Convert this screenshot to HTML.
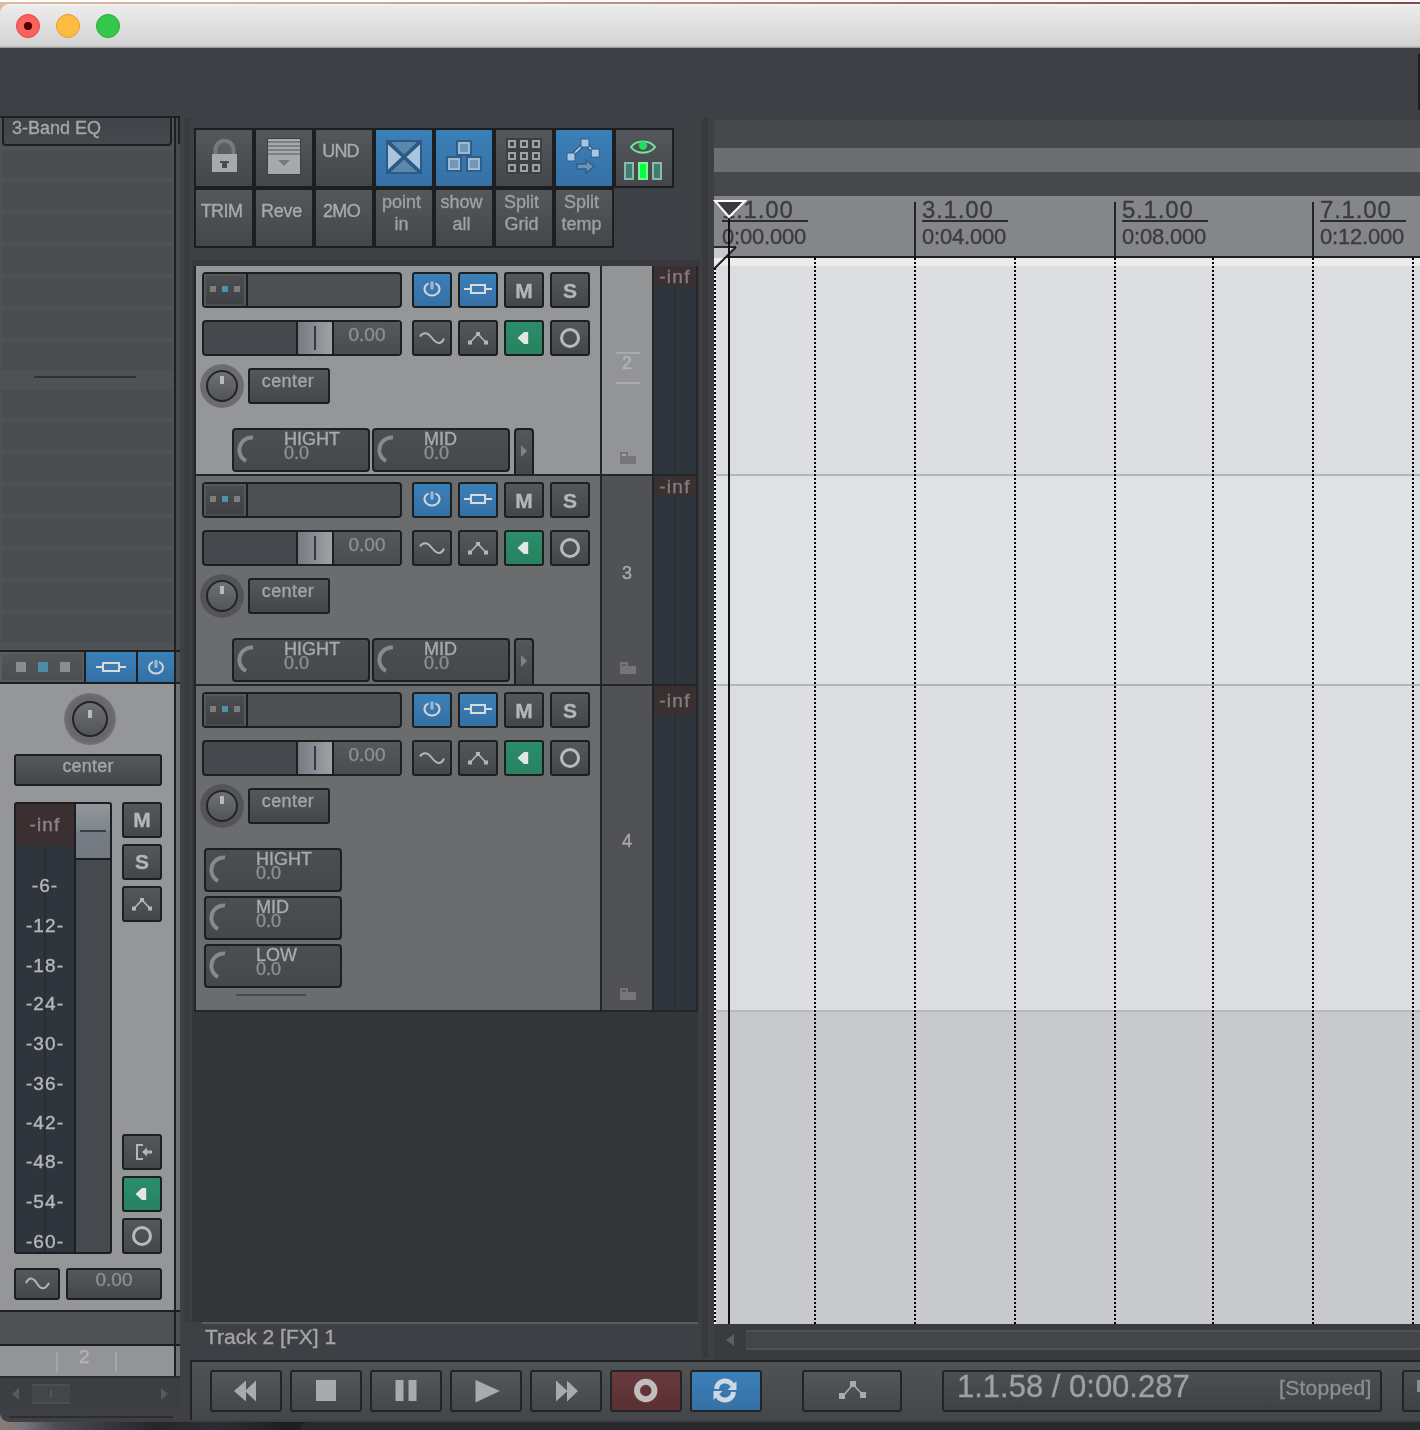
<!DOCTYPE html>
<html>
<head>
<meta charset="utf-8">
<title>REAPER</title>
<style>
html,body{margin:0;padding:0;}
body{width:1420px;height:1430px;overflow:hidden;position:relative;background:#3f4045;font-family:"Liberation Sans",sans-serif;color:#b4b5b7;}
.a{position:absolute;box-sizing:border-box;}
.btn{position:absolute;box-sizing:border-box;border:2px solid #1d1e20;border-radius:3px;background:linear-gradient(#54575b,#44464a);}
.blue{background:linear-gradient(#3b80b8,#3570a6);}
.green{background:linear-gradient(#2b8d6c,#27825f);}
.red{background:linear-gradient(#683a3d,#5b3033);}
.t{position:absolute;white-space:nowrap;line-height:1;will-change:transform;-webkit-text-stroke:.35px;}
svg{position:absolute;overflow:visible;}
</style>
</head>
<body>
<!--TITLEBAR-->
<div class="a" style="left:0;top:0;width:1420px;height:2px;background:#fff"></div>
<div class="a" style="left:0;top:2px;width:1420px;height:10px;background:linear-gradient(90deg,#e0ba9c,#c8a58c 30%,#a87068 65%,#86474d)"></div>
<div class="a" style="left:0;top:4px;width:1420px;height:44px;border-top-left-radius:9px;background:linear-gradient(#f4f4f4,#ebebeb 6%,#d4d4d4 93%,#c0c0c0 97%,#8a8a8c)"></div>
<div class="a" style="left:16px;top:14px;width:24px;height:24px;border-radius:50%;background:#fc625d;border:1px solid #e2463f"></div>
<div class="a" style="left:24px;top:22px;width:8px;height:8px;border-radius:50%;background:#4d0000"></div>
<div class="a" style="left:56px;top:14px;width:24px;height:24px;border-radius:50%;background:#fdbc40;border:1px solid #e0a028"></div>
<div class="a" style="left:96px;top:14px;width:24px;height:24px;border-radius:50%;background:#34c84a;border:1px solid #27aa35"></div>
<div class="a" style="left:1418px;top:54px;width:2px;height:56px;background:#1f1f1f"></div>
<!--LEFT-->
<div class="a" style="left:0;top:1414px;width:1420px;height:16px;background:linear-gradient(90deg,#8a7c73 0,#77777d 1.500%,#4c4c53 4%,#3a3a41 7%,#25252a 11%,#2d2d33 15%,#1f1f23 20%,#1c1c20 100%)"></div>
<div class="a" style="left:0;top:1378px;width:1420px;height:44px;background:#3f4045;border-bottom-left-radius:9px"></div>
<div class="a" style="left:0;top:116px;width:180px;height:2px;background:#1e1f21"></div>
<div class="a" style="left:0;top:118px;width:174px;height:532px;background:#4e5256"></div>
<div class="a" style="left:176px;top:118px;width:4px;height:532px;background:#484a4e"></div>
<div class="a" style="left:2px;top:150px;width:170px;height:28px;background:#4a4c50"></div>
<div class="a" style="left:2px;top:182px;width:170px;height:28px;background:#4a4c50"></div>
<div class="a" style="left:2px;top:214px;width:170px;height:28px;background:#4a4c50"></div>
<div class="a" style="left:2px;top:246px;width:170px;height:28px;background:#4a4c50"></div>
<div class="a" style="left:2px;top:278px;width:170px;height:28px;background:#4a4c50"></div>
<div class="a" style="left:2px;top:310px;width:170px;height:28px;background:#4a4c50"></div>
<div class="a" style="left:2px;top:342px;width:170px;height:28px;background:#4a4c50"></div>
<div class="a" style="left:2px;top:390px;width:170px;height:28px;background:#4a4c50"></div>
<div class="a" style="left:2px;top:422px;width:170px;height:28px;background:#4a4c50"></div>
<div class="a" style="left:2px;top:454px;width:170px;height:28px;background:#4a4c50"></div>
<div class="a" style="left:2px;top:486px;width:170px;height:28px;background:#4a4c50"></div>
<div class="a" style="left:2px;top:518px;width:170px;height:28px;background:#4a4c50"></div>
<div class="a" style="left:2px;top:550px;width:170px;height:28px;background:#4a4c50"></div>
<div class="a" style="left:2px;top:582px;width:170px;height:28px;background:#4a4c50"></div>
<div class="a" style="left:2px;top:614px;width:170px;height:28px;background:#4a4c50"></div>
<div class="a" style="left:34px;top:376px;width:102px;height:2px;background:#303134"></div>
<div class="a" style="left:2px;top:118px;width:170px;height:28px;background:linear-gradient(#40444a,#464a4e);border:2px solid #1e1f21;border-top:0;border-radius:0 0 4px 4px"></div>
<div class="t" style="left:12px;top:118px;font-size:18px;line-height:21px;color:#a6a7a9">3-Band EQ</div>
<div class="a" style="left:174px;top:116px;width:2px;height:1262px;background:#1e1f21"></div>
<div class="a" style="left:178px;top:116px;width:2px;height:28px;background:#1e1f21"></div>
<div class="a" style="left:184px;top:118px;width:6px;height:1204px;background:#3a3b3e"></div>
<div class="a" style="left:0;top:650px;width:180px;height:2px;background:#1e1f21"></div>
<div class="a" style="left:0;top:682px;width:180px;height:2px;background:#1e1f21"></div>
<div class="a" style="left:0;top:652px;width:84px;height:30px;background:linear-gradient(#545659,#4b4d50);border:2px solid #5a5c5f;border-bottom-color:#56585b"></div>
<div class="a" style="left:176px;top:652px;width:4px;height:30px;background:#4d4f52"></div>
<div class="a" style="left:16px;top:662px;width:10px;height:10px;background:#8b8c8e"></div>
<div class="a" style="left:38px;top:662px;width:10px;height:10px;background:#4a8ea6"></div>
<div class="a" style="left:60px;top:662px;width:10px;height:10px;background:#8b8c8e"></div>
<div class="a" style="left:84px;top:652px;width:2px;height:30px;background:#1e1f21"></div>
<div class="a blue" style="left:86px;top:652px;width:50px;height:30px"></div>
<div class="a" style="left:136px;top:652px;width:2px;height:30px;background:#1e1f21"></div>
<div class="a blue" style="left:138px;top:652px;width:36px;height:30px"></div>
<svg style="left:86px;top:652px" width="50" height="30"><path d="M10 15H40" stroke="#d9dadb" stroke-width="2" fill="none"/><rect x="17" y="11" width="16" height="8" fill="#3a7bb1" stroke="#d9dadb" stroke-width="2"/></svg>
<svg style="left:138px;top:652px" width="36" height="30"><path d="M15 9.800A7 6.200 0 1 0 21 9.800" stroke="#d0d4d8" stroke-width="2" fill="none"/><rect x="16.500" y="8" width="3" height="8" fill="#9db9d2"/></svg>
<div class="a" style="left:0;top:684px;width:174px;height:626px;background:#959698"></div>
<div class="a" style="left:176px;top:684px;width:4px;height:626px;background:#707174"></div>
<div class="a" style="left:0;top:1310px;width:180px;height:2px;background:#1e1f21"></div>
<div class="a" style="left:0;top:1312px;width:174px;height:32px;background:#4e5255"></div>
<div class="a" style="left:176px;top:1312px;width:4px;height:32px;background:#4d4f52"></div>
<div class="a" style="left:0;top:1344px;width:180px;height:2px;background:#1e1f21"></div>
<div class="a" style="left:0;top:1346px;width:174px;height:30px;background:#939496"></div>
<div class="a" style="left:176px;top:1346px;width:4px;height:30px;background:#707174"></div>
<div class="a" style="left:0;top:1376px;width:180px;height:2px;background:#2a2b2d"></div>
<div class="a" style="left:56px;top:1352px;width:2px;height:20px;background:#a5a6a8"></div>
<div class="a" style="left:115px;top:1352px;width:2px;height:20px;background:#a5a6a8"></div>
<div class="t" style="left:79px;top:1347px;font-size:19px;line-height:20px;color:#b3b4b6">2</div>
<div class="a" style="left:0;top:1378px;width:180px;height:32px;background:#3d3e41"></div>
<div class="a" style="left:32px;top:1384px;width:38px;height:20px;background:#444548;border-top:2px solid #4c4d50;border-bottom:2px solid #4c4d50"></div>
<div class="a" style="left:50px;top:1390px;width:2px;height:8px;background:#55565a"></div>
<svg style="left:0;top:1378px" width="180" height="32"><path d="M12 16L19 10V22Z" fill="#58595c"/><path d="M168 16L161 10V22Z" fill="#58595c"/></svg>
<div class="a" style="left:9px;top:1416px;width:164px;height:2px;background:#2c2d2f"></div>
<div class="a" style="left:64px;top:693px;width:52px;height:52px;border-radius:50%;background:radial-gradient(circle,rgba(0,0,0,.34) 0,rgba(0,0,0,.3) 62%,rgba(0,0,0,.16) 80%,rgba(0,0,0,.05) 92%,rgba(0,0,0,0) 100%)"></div>
<div class="a" style="left:72px;top:701px;width:36px;height:36px;border-radius:50%;border:2px solid #232426;background:linear-gradient(#6f7073,#535458)"></div>
<div class="a" style="left:88px;top:710px;width:4px;height:8px;background:#b9babc"></div>
<div class="btn" style="left:14px;top:754px;width:148px;height:32px"></div>
<div class="t" style="left:14px;top:754px;width:148px;text-align:center;font-size:18px;line-height:24px;color:#a4a5a7;letter-spacing:.2px">center</div>
<div class="a" style="left:14px;top:802px;width:98px;height:452px;border:2px solid #1d1e20;border-radius:3px;background:#474b4f;overflow:hidden"><div class="a" style="left:0;top:0;width:58px;height:448px;background:#2f353c"></div><div class="a" style="left:28px;top:42px;width:2px;height:406px;background:#292d32"></div><div class="a" style="left:0;top:0;width:58px;height:42px;background:#3a2f31"></div><div class="a" style="left:58px;top:0;width:2px;height:448px;background:#1d1e20"></div><div class="a" style="left:60px;top:0;width:34px;height:54px;background:linear-gradient(#90969c,#7f868c 49%,#767d84 51%,#71787f)"></div><div class="a" style="left:64px;top:26px;width:26px;height:2px;background:#3c4045"></div><div class="a" style="left:60px;top:54px;width:34px;height:2px;background:#1d1e20"></div></div>
<div class="t" style="left:16px;top:814px;width:58px;text-align:center;font-size:19px;line-height:22px;color:#8f8587;letter-spacing:1.2px">-inf</div>
<div class="t" style="left:16px;top:875px;width:58px;text-align:center;font-size:19px;line-height:22px;color:#b7b8ba;letter-spacing:1.1px">-6-</div>
<div class="t" style="left:16px;top:915px;width:58px;text-align:center;font-size:19px;line-height:22px;color:#b7b8ba;letter-spacing:1.1px">-12-</div>
<div class="t" style="left:16px;top:955px;width:58px;text-align:center;font-size:19px;line-height:22px;color:#b7b8ba;letter-spacing:1.1px">-18-</div>
<div class="t" style="left:16px;top:993px;width:58px;text-align:center;font-size:19px;line-height:22px;color:#b7b8ba;letter-spacing:1.1px">-24-</div>
<div class="t" style="left:16px;top:1033px;width:58px;text-align:center;font-size:19px;line-height:22px;color:#b7b8ba;letter-spacing:1.1px">-30-</div>
<div class="t" style="left:16px;top:1073px;width:58px;text-align:center;font-size:19px;line-height:22px;color:#b7b8ba;letter-spacing:1.1px">-36-</div>
<div class="t" style="left:16px;top:1112px;width:58px;text-align:center;font-size:19px;line-height:22px;color:#b7b8ba;letter-spacing:1.1px">-42-</div>
<div class="t" style="left:16px;top:1151px;width:58px;text-align:center;font-size:19px;line-height:22px;color:#b7b8ba;letter-spacing:1.1px">-48-</div>
<div class="t" style="left:16px;top:1191px;width:58px;text-align:center;font-size:19px;line-height:22px;color:#b7b8ba;letter-spacing:1.1px">-54-</div>
<div class="t" style="left:16px;top:1231px;width:58px;text-align:center;font-size:19px;line-height:22px;color:#b7b8ba;letter-spacing:1.1px">-60-</div>
<div class="btn" style="left:122px;top:802px;width:40px;height:36px"></div>
<div class="t" style="left:122px;top:809px;width:40px;text-align:center;font-size:21px;font-weight:bold;color:#b4b5b7">M</div>
<div class="btn" style="left:122px;top:844px;width:40px;height:36px"></div>
<div class="t" style="left:122px;top:851px;width:40px;text-align:center;font-size:21px;font-weight:bold;color:#b4b5b7">S</div>
<div class="btn" style="left:122px;top:886px;width:40px;height:36px"></div>
<svg style="left:122px;top:886px" width="40" height="36"><path d="M12 22.500L20 14L28 22.500" stroke="#b4b5b7" stroke-width="1.600" fill="none"/><rect x="18" y="12" width="4" height="4" fill="#b4b5b7"/><rect x="10" y="20.500" width="4" height="4" fill="#b4b5b7"/><rect x="26" y="20.500" width="4" height="4" fill="#b4b5b7"/></svg>
<div class="btn" style="left:122px;top:1134px;width:40px;height:36px"></div>
<svg style="left:122px;top:1134px" width="40" height="36"><path d="M21 11H15V25H21" stroke="#b4b5b7" stroke-width="2" fill="none"/><path d="M20 18L25 13.5V16.5H30V19.5H25V22.5Z" fill="#b4b5b7"/></svg>
<div class="btn green" style="left:122px;top:1176px;width:40px;height:36px"></div>
<svg style="left:122px;top:1176px" width="40" height="36"><path d="M13.500 18L20 12H24.200V24H20Z" fill="#e4e6e6"/></svg>
<div class="btn" style="left:122px;top:1218px;width:40px;height:36px"></div>
<svg style="left:122px;top:1218px" width="40" height="36"><circle cx="20" cy="18" r="8.5" stroke="#b9babc" stroke-width="3" fill="none"/></svg>
<div class="btn" style="left:14px;top:1268px;width:46px;height:32px"></div>
<svg style="left:14px;top:1268px" width="46" height="32"><path d="M12 15C15 9 19 9 23 15.5S31 22 35 15" stroke="#b4b5b7" stroke-width="2" fill="none"/></svg>
<div class="btn" style="left:66px;top:1268px;width:96px;height:32px"></div>
<div class="t" style="left:66px;top:1269px;width:96px;text-align:center;font-size:19px;line-height:22px;color:#8d8f92">0.00</div>
<!--TOOLBAR-->
<div class="a" style="left:194px;top:128px;width:480px;height:60px;background:#232426"></div>
<div class="a" style="left:194px;top:186px;width:420px;height:62px;background:#232426"></div>
<div class="btn " style="left:194px;top:128px;width:60px;height:60px"></div>
<div class="btn " style="left:254px;top:128px;width:60px;height:60px"></div>
<div class="btn " style="left:314px;top:128px;width:60px;height:60px"></div>
<div class="btn blue" style="left:374px;top:128px;width:60px;height:60px"></div>
<div class="btn blue" style="left:434px;top:128px;width:60px;height:60px"></div>
<div class="btn " style="left:494px;top:128px;width:60px;height:60px"></div>
<div class="btn blue" style="left:554px;top:128px;width:60px;height:60px"></div>
<div class="btn " style="left:614px;top:128px;width:60px;height:60px"></div>
<div class="btn " style="left:194px;top:188px;width:60px;height:60px"></div>
<div class="btn " style="left:254px;top:188px;width:60px;height:60px"></div>
<div class="btn " style="left:314px;top:188px;width:60px;height:60px"></div>
<div class="btn " style="left:374px;top:188px;width:60px;height:60px"></div>
<div class="btn " style="left:434px;top:188px;width:60px;height:60px"></div>
<div class="btn " style="left:494px;top:188px;width:60px;height:60px"></div>
<div class="btn " style="left:554px;top:188px;width:60px;height:60px"></div>
<svg style="left:194px;top:128px" width="59" height="59"><path d="M21.5 27V21.700A9 9 0 0 1 39.500 21.700V27" stroke="#777a7d" stroke-width="4" fill="#5b5e61"/><rect x="18" y="26" width="25" height="18" fill="#a8a9ab"/><path d="M26 33H35V35H33V40H28V35H26Z" fill="#4a4c50"/></svg>
<svg style="left:254px;top:128px" width="59" height="59"><rect x="13" y="10" width="34" height="37" fill="#3e4043"/><rect x="14" y="11" width="32" height="35" fill="#a8a9ab"/><rect x="14" y="13" width="32" height="2" fill="#7d7f82"/><rect x="14" y="17" width="32" height="2" fill="#7d7f82"/><rect x="14" y="21" width="32" height="2" fill="#7d7f82"/><rect x="14" y="25" width="32" height="2" fill="#7d7f82"/><path d="M24 32H36L30 38Z" fill="#77797c"/></svg>
<svg style="left:374px;top:128px" width="59" height="59"><rect x="12" y="12" width="36" height="34" fill="#2d5a85"/><path d="M14 16.500L27.500 29L14 41.500Z" fill="#a9c6de"/><path d="M46 16.500L32.500 29L46 41.500Z" fill="#a9c6de"/><path d="M17 14H43L30 26.500Z" fill="#5c87ad"/><path d="M17 44H43L30 31.500Z" fill="#5c87ad"/></svg>
<svg style="left:434px;top:128px" width="59" height="59"><rect x="22" y="12" width="16" height="16" fill="#2d5f8a"/><rect x="24" y="14" width="12" height="12" fill="#9dbad2"/><rect x="26" y="16" width="8" height="8" fill="#6f98ba"/><rect x="12" y="28" width="16" height="16" fill="#2d5f8a"/><rect x="14" y="30" width="12" height="12" fill="#9dbad2"/><rect x="16" y="32" width="8" height="8" fill="#6f98ba"/><rect x="32" y="28" width="16" height="16" fill="#2d5f8a"/><rect x="34" y="30" width="12" height="12" fill="#9dbad2"/><rect x="36" y="32" width="8" height="8" fill="#6f98ba"/></svg>
<svg style="left:494px;top:128px" width="59" height="59"><rect x="12" y="10" width="36" height="36" fill="#3d3f42"/><rect x="15" y="13" width="6" height="6" fill="none" stroke="#a0a1a3" stroke-width="2"/><rect x="27" y="13" width="6" height="6" fill="none" stroke="#a0a1a3" stroke-width="2"/><rect x="39" y="13" width="6" height="6" fill="none" stroke="#a0a1a3" stroke-width="2"/><rect x="15" y="25" width="6" height="6" fill="none" stroke="#a0a1a3" stroke-width="2"/><rect x="27" y="25" width="6" height="6" fill="none" stroke="#a0a1a3" stroke-width="2"/><rect x="39" y="25" width="6" height="6" fill="none" stroke="#a0a1a3" stroke-width="2"/><rect x="15" y="37" width="6" height="6" fill="none" stroke="#a0a1a3" stroke-width="2"/><rect x="27" y="37" width="6" height="6" fill="none" stroke="#a0a1a3" stroke-width="2"/><rect x="39" y="37" width="6" height="6" fill="none" stroke="#a0a1a3" stroke-width="2"/></svg>
<svg style="left:554px;top:128px" width="59" height="59"><path d="M17 28.500L31 15L41 25" stroke="#2d5f8a" stroke-width="4" fill="none"/><path d="M17 28.500L31 15L41 25" stroke="#c9dbe9" stroke-width="1.600" fill="none"/><rect x="26.5" y="10.5" width="9" height="9" fill="#2d5f8a"/><rect x="27.5" y="11.5" width="7" height="7" fill="#a9c6de"/><rect x="12.5" y="24.5" width="9" height="9" fill="#2d5f8a"/><rect x="13.5" y="25.5" width="7" height="7" fill="#a9c6de"/><rect x="36.8" y="20.6" width="9" height="9" fill="#2d5f8a"/><rect x="37.8" y="21.6" width="7" height="7" fill="#a9c6de"/><path d="M23 36H32V32L40 38.500L32 45V41H23Z" fill="#6f93b3" stroke="#2d5f8a" stroke-width="1.500"/></svg>
<svg style="left:614px;top:128px" width="59" height="59"><path d="M17 19C22 11.500 36 11.500 41 19C36 26.500 22 26.500 17 19Z" fill="none" stroke="#6ee79a" stroke-width="2"/><circle cx="29" cy="17.500" r="4.200" fill="#1fe05a"/><rect x="11" y="35" width="8" height="16" fill="#3d7d72" stroke="#8fb8ad" stroke-width="2"/><rect x="25" y="35" width="8" height="16" fill="#00ff40" stroke="#7df09a" stroke-width="2"/><rect x="39" y="35" width="8" height="16" fill="#3d7d72" stroke="#8fb8ad" stroke-width="2"/></svg>
<div class="t" style="left:311px;top:142px;width:59px;text-align:center;font-size:18px;letter-spacing:-.8px;color:#a9aaac">UND</div>
<div class="t" style="left:192px;top:202px;width:59px;text-align:center;font-size:18px;letter-spacing:-0.6px;color:#a9aaac">TRIM</div>
<div class="t" style="left:252px;top:202px;width:59px;text-align:center;font-size:18px;letter-spacing:-0.2px;color:#a9aaac">Reve</div>
<div class="t" style="left:312px;top:202px;width:59px;text-align:center;font-size:18px;letter-spacing:-0.6px;color:#a9aaac">2MO</div>
<div class="t" style="left:372px;top:191px;width:59px;text-align:center;font-size:18px;line-height:22px;color:#a0a1a3;white-space:normal">point<br>in</div>
<div class="t" style="left:432px;top:191px;width:59px;text-align:center;font-size:18px;line-height:22px;color:#a0a1a3;white-space:normal">show<br>all</div>
<div class="t" style="left:492px;top:191px;width:59px;text-align:center;font-size:18px;line-height:22px;color:#a0a1a3;white-space:normal">Split<br>Grid</div>
<div class="t" style="left:552px;top:191px;width:59px;text-align:center;font-size:18px;line-height:22px;color:#a0a1a3;white-space:normal">Split<br>temp</div>
<!--TRACKS-->
<div class="a" style="left:192px;top:260px;width:508px;height:6px;background:#38393c"></div>
<div class="a" style="left:192px;top:266px;width:2px;height:1056px;background:#363739"></div>
<div class="a" style="left:194px;top:266px;width:504px;height:746px;background:#242527"></div>
<div class="a" style="left:702px;top:118px;width:6px;height:1240px;background:#38393c"></div>
<div class="a" style="left:196px;top:266px;width:404px;height:208px;background:#959698"></div>
<div class="a" style="left:602px;top:266px;width:50px;height:208px;background:#939496"></div>
<div class="a" style="left:654px;top:266px;width:42px;height:208px;background:#2f353c"></div>
<div class="a" style="left:674px;top:286px;width:2px;height:188px;background:#2a2d31"></div>
<div class="a" style="left:654px;top:266px;width:42px;height:20px;background:#3a2f31"></div>
<div class="t" style="left:654px;top:267px;width:42px;text-align:center;font-size:19px;line-height:20px;color:#857d7e;letter-spacing:1.3px">-inf</div>
<div class="btn" style="left:202px;top:272px;width:200px;height:36px;background:#4d5154;border-radius:4px"></div>
<div class="a" style="left:204px;top:274px;width:42px;height:32px;background:linear-gradient(#4b4d50,#3f4144);border:2px solid #55575a;border-bottom-color:#4a4c4f"></div>
<div class="a" style="left:246px;top:274px;width:2px;height:32px;background:#1d1e20"></div>
<div class="a" style="left:210px;top:286px;width:6px;height:6px;background:#7c7d7f"></div>
<div class="a" style="left:222px;top:286px;width:6px;height:6px;background:#4a93ad"></div>
<div class="a" style="left:234px;top:286px;width:6px;height:6px;background:#7c7d7f"></div>
<div class="btn blue" style="left:412px;top:272px;width:40px;height:36px"></div>
<svg style="left:412px;top:272px" width="40" height="36"><path d="M16.500 11.300A7.500 6.500 0 1 0 23.500 11.300" stroke="#d0d4d8" stroke-width="2" fill="none"/><rect x="18.500" y="9.500" width="3" height="8" fill="#9db9d2"/></svg>
<div class="btn blue" style="left:458px;top:272px;width:40px;height:36px"></div>
<svg style="left:458px;top:272px" width="40" height="36"><path d="M6 17H34" stroke="#d9dadb" stroke-width="2" fill="none"/><rect x="13" y="13" width="14" height="8" fill="#3a7bb1" stroke="#d9dadb" stroke-width="2"/></svg>
<div class="btn" style="left:504px;top:272px;width:40px;height:36px"></div>
<div class="t" style="left:504px;top:280px;width:40px;text-align:center;font-size:21px;font-weight:bold;color:#b4b5b7">M</div>
<div class="btn" style="left:550px;top:272px;width:40px;height:36px"></div>
<div class="t" style="left:550px;top:280px;width:40px;text-align:center;font-size:21px;font-weight:bold;color:#b4b5b7">S</div>
<div class="btn" style="left:202px;top:320px;width:200px;height:36px;background:#45484c;border-radius:4px"></div>
<div class="a" style="left:296px;top:322px;width:38px;height:32px;background:linear-gradient(90deg,#747a80,#9da2a7);border-left:2px solid #1d1e20;border-right:2px solid #1d1e20"></div>
<div class="a" style="left:314px;top:326px;width:2px;height:24px;background:#35383c"></div>
<div class="a" style="left:334px;top:322px;width:66px;height:32px;background:linear-gradient(#56595c,#4a4d50)"></div>
<div class="t" style="left:334px;top:325px;width:66px;text-align:center;font-size:19px;color:#8d8f91">0.00</div>
<div class="btn" style="left:412px;top:320px;width:40px;height:36px"></div>
<svg style="left:412px;top:320px" width="40" height="36"><path d="M8 16.500C10.500 12.500 15 11.500 20 18S29.500 24.500 32 18.500" stroke="#b4b5b7" stroke-width="2" fill="none"/></svg>
<div class="btn" style="left:458px;top:320px;width:40px;height:36px"></div>
<svg style="left:458px;top:320px" width="40" height="36"><path d="M12 22.500L20 14L28 22.500" stroke="#b4b5b7" stroke-width="1.600" fill="none"/><rect x="18" y="12" width="4" height="4" fill="#b4b5b7"/><rect x="10" y="20.500" width="4" height="4" fill="#b4b5b7"/><rect x="26" y="20.500" width="4" height="4" fill="#b4b5b7"/></svg>
<div class="btn green" style="left:504px;top:320px;width:40px;height:36px"></div>
<svg style="left:504px;top:320px" width="40" height="36"><path d="M13.500 18L20 12H24.200V24H20Z" fill="#e4e6e6"/></svg>
<div class="btn" style="left:550px;top:320px;width:40px;height:36px"></div>
<svg style="left:550px;top:320px" width="40" height="36"><circle cx="20" cy="18" r="8.5" stroke="#b9babc" stroke-width="3" fill="none"/></svg>
<div class="a" style="left:200px;top:364px;width:44px;height:44px;border-radius:50%;background:radial-gradient(circle,rgba(0,0,0,.3) 0,rgba(0,0,0,.28) 66%,rgba(0,0,0,.15) 82%,rgba(0,0,0,.05) 93%,rgba(0,0,0,0) 100%)"></div>
<div class="a" style="left:206px;top:370px;width:32px;height:32px;border-radius:50%;border:2px solid #232426;background:linear-gradient(#6f7073,#535458)"></div>
<div class="a" style="left:220px;top:376px;width:4px;height:8px;background:#b9babc"></div>
<div class="btn" style="left:248px;top:368px;width:82px;height:36px"></div>
<div class="t" style="left:248px;top:372px;width:80px;text-align:center;font-size:18px;letter-spacing:.4px;color:#a4a5a7">center</div>
<div class="btn" style="left:232px;top:428px;width:138px;height:44px;border-radius:4px;background:linear-gradient(#4b4e52,#45484b)"></div>
<svg style="left:232px;top:428px" width="40" height="44"><path d="M21 9.5A12.5 12.5 0 0 0 14 33" stroke="#88898b" stroke-width="4" fill="none"/></svg>
<div class="t" style="left:284px;top:430px;font-size:18px;color:#a9aaac">HIGHT</div>
<div class="t" style="left:284px;top:444px;font-size:18px;color:#8d8f91">0.0</div>
<div class="btn" style="left:372px;top:428px;width:138px;height:44px;border-radius:4px;background:linear-gradient(#4b4e52,#45484b)"></div>
<svg style="left:372px;top:428px" width="40" height="44"><path d="M21 9.5A12.5 12.5 0 0 0 14 33" stroke="#88898b" stroke-width="4" fill="none"/></svg>
<div class="t" style="left:424px;top:430px;font-size:18px;color:#a9aaac">MID</div>
<div class="t" style="left:424px;top:444px;font-size:18px;color:#8d8f91">0.0</div>
<div class="btn" style="left:514px;top:428px;width:20px;height:46px;border-bottom:0;border-radius:4px 4px 0 0"></div>
<svg style="left:514px;top:428px" width="20" height="44"><path d="M7 17L13 23L7 29Z" fill="#808184"/></svg>
<div class="t" style="left:602px;top:353px;width:50px;text-align:center;font-size:18px;line-height:20px;color:#b3b4b6">2</div>
<div class="a" style="left:616px;top:352px;width:24px;height:2px;background:#a9aaac"></div>
<div class="a" style="left:616px;top:382px;width:24px;height:2px;background:#a9aaac"></div>
<svg style="left:620px;top:452px" width="16" height="12"><path d="M0 0H8V4H16V12H0Z" fill="#777577"/><rect x="2" y="2" width="4" height="2" fill="#a2a2a4"/></svg>
<div class="a" style="left:196px;top:476px;width:404px;height:208px;background:#6b6c6e"></div>
<div class="a" style="left:602px;top:476px;width:50px;height:208px;background:#515256"></div>
<div class="a" style="left:654px;top:476px;width:42px;height:208px;background:#2f353c"></div>
<div class="a" style="left:674px;top:496px;width:2px;height:188px;background:#2a2d31"></div>
<div class="a" style="left:654px;top:476px;width:42px;height:20px;background:#3a2f31"></div>
<div class="t" style="left:654px;top:477px;width:42px;text-align:center;font-size:19px;line-height:20px;color:#857d7e;letter-spacing:1.3px">-inf</div>
<div class="btn" style="left:202px;top:482px;width:200px;height:36px;background:#4d5154;border-radius:4px"></div>
<div class="a" style="left:204px;top:484px;width:42px;height:32px;background:linear-gradient(#4b4d50,#3f4144);border:2px solid #55575a;border-bottom-color:#4a4c4f"></div>
<div class="a" style="left:246px;top:484px;width:2px;height:32px;background:#1d1e20"></div>
<div class="a" style="left:210px;top:496px;width:6px;height:6px;background:#7c7d7f"></div>
<div class="a" style="left:222px;top:496px;width:6px;height:6px;background:#4a93ad"></div>
<div class="a" style="left:234px;top:496px;width:6px;height:6px;background:#7c7d7f"></div>
<div class="btn blue" style="left:412px;top:482px;width:40px;height:36px"></div>
<svg style="left:412px;top:482px" width="40" height="36"><path d="M16.500 11.300A7.500 6.500 0 1 0 23.500 11.300" stroke="#d0d4d8" stroke-width="2" fill="none"/><rect x="18.500" y="9.500" width="3" height="8" fill="#9db9d2"/></svg>
<div class="btn blue" style="left:458px;top:482px;width:40px;height:36px"></div>
<svg style="left:458px;top:482px" width="40" height="36"><path d="M6 17H34" stroke="#d9dadb" stroke-width="2" fill="none"/><rect x="13" y="13" width="14" height="8" fill="#3a7bb1" stroke="#d9dadb" stroke-width="2"/></svg>
<div class="btn" style="left:504px;top:482px;width:40px;height:36px"></div>
<div class="t" style="left:504px;top:490px;width:40px;text-align:center;font-size:21px;font-weight:bold;color:#b4b5b7">M</div>
<div class="btn" style="left:550px;top:482px;width:40px;height:36px"></div>
<div class="t" style="left:550px;top:490px;width:40px;text-align:center;font-size:21px;font-weight:bold;color:#b4b5b7">S</div>
<div class="btn" style="left:202px;top:530px;width:200px;height:36px;background:#45484c;border-radius:4px"></div>
<div class="a" style="left:296px;top:532px;width:38px;height:32px;background:linear-gradient(90deg,#747a80,#9da2a7);border-left:2px solid #1d1e20;border-right:2px solid #1d1e20"></div>
<div class="a" style="left:314px;top:536px;width:2px;height:24px;background:#35383c"></div>
<div class="a" style="left:334px;top:532px;width:66px;height:32px;background:linear-gradient(#56595c,#4a4d50)"></div>
<div class="t" style="left:334px;top:535px;width:66px;text-align:center;font-size:19px;color:#8d8f91">0.00</div>
<div class="btn" style="left:412px;top:530px;width:40px;height:36px"></div>
<svg style="left:412px;top:530px" width="40" height="36"><path d="M8 16.500C10.500 12.500 15 11.500 20 18S29.500 24.500 32 18.500" stroke="#b4b5b7" stroke-width="2" fill="none"/></svg>
<div class="btn" style="left:458px;top:530px;width:40px;height:36px"></div>
<svg style="left:458px;top:530px" width="40" height="36"><path d="M12 22.500L20 14L28 22.500" stroke="#b4b5b7" stroke-width="1.600" fill="none"/><rect x="18" y="12" width="4" height="4" fill="#b4b5b7"/><rect x="10" y="20.500" width="4" height="4" fill="#b4b5b7"/><rect x="26" y="20.500" width="4" height="4" fill="#b4b5b7"/></svg>
<div class="btn green" style="left:504px;top:530px;width:40px;height:36px"></div>
<svg style="left:504px;top:530px" width="40" height="36"><path d="M13.500 18L20 12H24.200V24H20Z" fill="#e4e6e6"/></svg>
<div class="btn" style="left:550px;top:530px;width:40px;height:36px"></div>
<svg style="left:550px;top:530px" width="40" height="36"><circle cx="20" cy="18" r="8.5" stroke="#b9babc" stroke-width="3" fill="none"/></svg>
<div class="a" style="left:200px;top:574px;width:44px;height:44px;border-radius:50%;background:radial-gradient(circle,rgba(0,0,0,.24) 0,rgba(0,0,0,.22) 66%,rgba(0,0,0,.12) 82%,rgba(0,0,0,.04) 93%,rgba(0,0,0,0) 100%)"></div>
<div class="a" style="left:206px;top:580px;width:32px;height:32px;border-radius:50%;border:2px solid #232426;background:linear-gradient(#6f7073,#535458)"></div>
<div class="a" style="left:220px;top:586px;width:4px;height:8px;background:#b9babc"></div>
<div class="btn" style="left:248px;top:578px;width:82px;height:36px"></div>
<div class="t" style="left:248px;top:582px;width:80px;text-align:center;font-size:18px;letter-spacing:.4px;color:#a4a5a7">center</div>
<div class="btn" style="left:232px;top:638px;width:138px;height:44px;border-radius:4px;background:linear-gradient(#4b4e52,#45484b)"></div>
<svg style="left:232px;top:638px" width="40" height="44"><path d="M21 9.5A12.5 12.5 0 0 0 14 33" stroke="#88898b" stroke-width="4" fill="none"/></svg>
<div class="t" style="left:284px;top:640px;font-size:18px;color:#a9aaac">HIGHT</div>
<div class="t" style="left:284px;top:654px;font-size:18px;color:#8d8f91">0.0</div>
<div class="btn" style="left:372px;top:638px;width:138px;height:44px;border-radius:4px;background:linear-gradient(#4b4e52,#45484b)"></div>
<svg style="left:372px;top:638px" width="40" height="44"><path d="M21 9.5A12.5 12.5 0 0 0 14 33" stroke="#88898b" stroke-width="4" fill="none"/></svg>
<div class="t" style="left:424px;top:640px;font-size:18px;color:#a9aaac">MID</div>
<div class="t" style="left:424px;top:654px;font-size:18px;color:#8d8f91">0.0</div>
<div class="btn" style="left:514px;top:638px;width:20px;height:46px;border-bottom:0;border-radius:4px 4px 0 0"></div>
<svg style="left:514px;top:638px" width="20" height="44"><path d="M7 17L13 23L7 29Z" fill="#808184"/></svg>
<div class="t" style="left:602px;top:563px;width:50px;text-align:center;font-size:18px;line-height:20px;color:#a9aaac">3</div>
<svg style="left:620px;top:662px" width="16" height="12"><path d="M0 0H8V4H16V12H0Z" fill="#777577"/><rect x="2" y="2" width="4" height="2" fill="#5c5d60"/></svg>
<div class="a" style="left:196px;top:686px;width:404px;height:324px;background:#6b6c6e"></div>
<div class="a" style="left:602px;top:686px;width:50px;height:324px;background:#515256"></div>
<div class="a" style="left:654px;top:686px;width:42px;height:324px;background:#2f353c"></div>
<div class="a" style="left:674px;top:716px;width:2px;height:294px;background:#2a2d31"></div>
<div class="a" style="left:654px;top:686px;width:42px;height:30px;background:#3a2f31"></div>
<div class="t" style="left:654px;top:691px;width:42px;text-align:center;font-size:19px;line-height:20px;color:#857d7e;letter-spacing:1.3px">-inf</div>
<div class="btn" style="left:202px;top:692px;width:200px;height:36px;background:#4d5154;border-radius:4px"></div>
<div class="a" style="left:204px;top:694px;width:42px;height:32px;background:linear-gradient(#4b4d50,#3f4144);border:2px solid #55575a;border-bottom-color:#4a4c4f"></div>
<div class="a" style="left:246px;top:694px;width:2px;height:32px;background:#1d1e20"></div>
<div class="a" style="left:210px;top:706px;width:6px;height:6px;background:#7c7d7f"></div>
<div class="a" style="left:222px;top:706px;width:6px;height:6px;background:#4a93ad"></div>
<div class="a" style="left:234px;top:706px;width:6px;height:6px;background:#7c7d7f"></div>
<div class="btn blue" style="left:412px;top:692px;width:40px;height:36px"></div>
<svg style="left:412px;top:692px" width="40" height="36"><path d="M16.500 11.300A7.500 6.500 0 1 0 23.500 11.300" stroke="#d0d4d8" stroke-width="2" fill="none"/><rect x="18.500" y="9.500" width="3" height="8" fill="#9db9d2"/></svg>
<div class="btn blue" style="left:458px;top:692px;width:40px;height:36px"></div>
<svg style="left:458px;top:692px" width="40" height="36"><path d="M6 17H34" stroke="#d9dadb" stroke-width="2" fill="none"/><rect x="13" y="13" width="14" height="8" fill="#3a7bb1" stroke="#d9dadb" stroke-width="2"/></svg>
<div class="btn" style="left:504px;top:692px;width:40px;height:36px"></div>
<div class="t" style="left:504px;top:700px;width:40px;text-align:center;font-size:21px;font-weight:bold;color:#b4b5b7">M</div>
<div class="btn" style="left:550px;top:692px;width:40px;height:36px"></div>
<div class="t" style="left:550px;top:700px;width:40px;text-align:center;font-size:21px;font-weight:bold;color:#b4b5b7">S</div>
<div class="btn" style="left:202px;top:740px;width:200px;height:36px;background:#45484c;border-radius:4px"></div>
<div class="a" style="left:296px;top:742px;width:38px;height:32px;background:linear-gradient(90deg,#747a80,#9da2a7);border-left:2px solid #1d1e20;border-right:2px solid #1d1e20"></div>
<div class="a" style="left:314px;top:746px;width:2px;height:24px;background:#35383c"></div>
<div class="a" style="left:334px;top:742px;width:66px;height:32px;background:linear-gradient(#56595c,#4a4d50)"></div>
<div class="t" style="left:334px;top:745px;width:66px;text-align:center;font-size:19px;color:#8d8f91">0.00</div>
<div class="btn" style="left:412px;top:740px;width:40px;height:36px"></div>
<svg style="left:412px;top:740px" width="40" height="36"><path d="M8 16.500C10.500 12.500 15 11.500 20 18S29.500 24.500 32 18.500" stroke="#b4b5b7" stroke-width="2" fill="none"/></svg>
<div class="btn" style="left:458px;top:740px;width:40px;height:36px"></div>
<svg style="left:458px;top:740px" width="40" height="36"><path d="M12 22.500L20 14L28 22.500" stroke="#b4b5b7" stroke-width="1.600" fill="none"/><rect x="18" y="12" width="4" height="4" fill="#b4b5b7"/><rect x="10" y="20.500" width="4" height="4" fill="#b4b5b7"/><rect x="26" y="20.500" width="4" height="4" fill="#b4b5b7"/></svg>
<div class="btn green" style="left:504px;top:740px;width:40px;height:36px"></div>
<svg style="left:504px;top:740px" width="40" height="36"><path d="M13.500 18L20 12H24.200V24H20Z" fill="#e4e6e6"/></svg>
<div class="btn" style="left:550px;top:740px;width:40px;height:36px"></div>
<svg style="left:550px;top:740px" width="40" height="36"><circle cx="20" cy="18" r="8.5" stroke="#b9babc" stroke-width="3" fill="none"/></svg>
<div class="a" style="left:200px;top:784px;width:44px;height:44px;border-radius:50%;background:radial-gradient(circle,rgba(0,0,0,.24) 0,rgba(0,0,0,.22) 66%,rgba(0,0,0,.12) 82%,rgba(0,0,0,.04) 93%,rgba(0,0,0,0) 100%)"></div>
<div class="a" style="left:206px;top:790px;width:32px;height:32px;border-radius:50%;border:2px solid #232426;background:linear-gradient(#6f7073,#535458)"></div>
<div class="a" style="left:220px;top:796px;width:4px;height:8px;background:#b9babc"></div>
<div class="btn" style="left:248px;top:788px;width:82px;height:36px"></div>
<div class="t" style="left:248px;top:792px;width:80px;text-align:center;font-size:18px;letter-spacing:.4px;color:#a4a5a7">center</div>
<div class="btn" style="left:204px;top:848px;width:138px;height:44px;border-radius:4px;background:linear-gradient(#4b4e52,#45484b)"></div>
<svg style="left:204px;top:848px" width="40" height="44"><path d="M21 9.5A12.5 12.5 0 0 0 14 33" stroke="#88898b" stroke-width="4" fill="none"/></svg>
<div class="t" style="left:256px;top:850px;font-size:18px;color:#a9aaac">HIGHT</div>
<div class="t" style="left:256px;top:864px;font-size:18px;color:#8d8f91">0.0</div>
<div class="btn" style="left:204px;top:896px;width:138px;height:44px;border-radius:4px;background:linear-gradient(#4b4e52,#45484b)"></div>
<svg style="left:204px;top:896px" width="40" height="44"><path d="M21 9.5A12.5 12.5 0 0 0 14 33" stroke="#88898b" stroke-width="4" fill="none"/></svg>
<div class="t" style="left:256px;top:898px;font-size:18px;color:#a9aaac">MID</div>
<div class="t" style="left:256px;top:912px;font-size:18px;color:#8d8f91">0.0</div>
<div class="btn" style="left:204px;top:944px;width:138px;height:44px;border-radius:4px;background:linear-gradient(#4b4e52,#45484b)"></div>
<svg style="left:204px;top:944px" width="40" height="44"><path d="M21 9.5A12.5 12.5 0 0 0 14 33" stroke="#88898b" stroke-width="4" fill="none"/></svg>
<div class="t" style="left:256px;top:946px;font-size:18px;color:#a9aaac">LOW</div>
<div class="t" style="left:256px;top:960px;font-size:18px;color:#8d8f91">0.0</div>
<div class="a" style="left:236px;top:994px;width:70px;height:2px;background:#4a4b4e"></div>
<div class="t" style="left:602px;top:831px;width:50px;text-align:center;font-size:18px;line-height:20px;color:#a9aaac">4</div>
<svg style="left:620px;top:988px" width="16" height="12"><path d="M0 0H8V4H16V12H0Z" fill="#777577"/><rect x="2" y="2" width="4" height="2" fill="#5c5d60"/></svg>
<!--ARRANGE-->
<div class="a" style="left:714px;top:120px;width:706px;height:76px;background:#47484b"></div>
<div class="a" style="left:714px;top:148px;width:706px;height:24px;background:#6d6e73"></div>
<div class="a" style="left:714px;top:196px;width:706px;height:60px;background:#85868a"></div>
<div class="a" style="left:714px;top:256px;width:706px;height:2px;background:#1c1d1f"></div>
<div class="a" style="left:714px;top:258px;width:706px;height:8px;background:#ececec"></div>
<div class="a" style="left:714px;top:266px;width:706px;height:208px;background:#dcdde0"></div>
<div class="a" style="left:714px;top:474px;width:706px;height:2px;background:#b5b6b9"></div>
<div class="a" style="left:714px;top:476px;width:706px;height:208px;background:#dfe2e5"></div>
<div class="a" style="left:714px;top:684px;width:706px;height:2px;background:#b5b6b9"></div>
<div class="a" style="left:714px;top:686px;width:706px;height:324px;background:#dcdde0"></div>
<div class="a" style="left:714px;top:1010px;width:706px;height:2px;background:#b8b9bc"></div>
<div class="a" style="left:714px;top:1012px;width:706px;height:312px;background:#c8c9cd"></div>
<svg style="left:714px;top:240px" width="30" height="30"><path d="M0 8H22L12 18H0Z" fill="#c9cacc"/><path d="M0 7H22" stroke="#2a2b2d" stroke-width="2"/><path d="M22 7L0 29" stroke="#1c1d1f" stroke-width="2"/></svg>
<div class="a" style="left:714px;top:268px;width:2px;height:1056px;background:repeating-linear-gradient(#000 0,#000 2px,#f4f4f6 2px,#f4f4f6 4px)"></div>
<div class="a" style="left:814px;top:258px;width:2px;height:1066px;background:repeating-linear-gradient(#000 0,#000 2px,transparent 2px,transparent 4px)"></div>
<div class="a" style="left:914px;top:258px;width:2px;height:1066px;background:repeating-linear-gradient(#000 0,#000 2px,transparent 2px,transparent 4px)"></div>
<div class="a" style="left:1014px;top:258px;width:2px;height:1066px;background:repeating-linear-gradient(#000 0,#000 2px,transparent 2px,transparent 4px)"></div>
<div class="a" style="left:1114px;top:258px;width:2px;height:1066px;background:repeating-linear-gradient(#000 0,#000 2px,transparent 2px,transparent 4px)"></div>
<div class="a" style="left:1212px;top:258px;width:2px;height:1066px;background:repeating-linear-gradient(#000 0,#000 2px,transparent 2px,transparent 4px)"></div>
<div class="a" style="left:1312px;top:258px;width:2px;height:1066px;background:repeating-linear-gradient(#000 0,#000 2px,transparent 2px,transparent 4px)"></div>
<div class="a" style="left:1412px;top:258px;width:2px;height:1066px;background:repeating-linear-gradient(#000 0,#000 2px,transparent 2px,transparent 4px)"></div>
<div class="t" style="left:722px;top:197px;font-size:24px;line-height:26px;color:#3b3c3f;letter-spacing:.8px">1.1.00</div>
<div class="a" style="left:722px;top:220px;width:86px;height:2px;background:#2a2b2d"></div>
<div class="t" style="left:722px;top:225px;font-size:22px;line-height:24px;color:#3b3c3f;letter-spacing:-.2px">0:00.000</div>
<div class="a" style="left:914px;top:202px;width:2px;height:54px;background:#232426"></div>
<div class="t" style="left:922px;top:197px;font-size:24px;line-height:26px;color:#3b3c3f;letter-spacing:.8px">3.1.00</div>
<div class="a" style="left:922px;top:220px;width:86px;height:2px;background:#2a2b2d"></div>
<div class="t" style="left:922px;top:225px;font-size:22px;line-height:24px;color:#3b3c3f;letter-spacing:-.2px">0:04.000</div>
<div class="a" style="left:1114px;top:202px;width:2px;height:54px;background:#232426"></div>
<div class="t" style="left:1122px;top:197px;font-size:24px;line-height:26px;color:#3b3c3f;letter-spacing:.8px">5.1.00</div>
<div class="a" style="left:1122px;top:220px;width:86px;height:2px;background:#2a2b2d"></div>
<div class="t" style="left:1122px;top:225px;font-size:22px;line-height:24px;color:#3b3c3f;letter-spacing:-.2px">0:08.000</div>
<div class="a" style="left:1312px;top:202px;width:2px;height:54px;background:#232426"></div>
<div class="t" style="left:1320px;top:197px;font-size:24px;line-height:26px;color:#3b3c3f;letter-spacing:.8px">7.1.00</div>
<div class="a" style="left:1320px;top:220px;width:86px;height:2px;background:#2a2b2d"></div>
<div class="t" style="left:1320px;top:225px;font-size:22px;line-height:24px;color:#3b3c3f;letter-spacing:-.2px">0:12.000</div>
<div class="a" style="left:728px;top:216px;width:2px;height:1108px;background:#111"></div>
<svg style="left:714px;top:198px" width="34" height="22"><path d="M1 3H31L15 19Z" fill="#3a3b3e" stroke="#fff" stroke-width="2"/></svg>
<div class="a" style="left:714px;top:1324px;width:706px;height:36px;background:#3a3b3e"></div>
<div class="a" style="left:746px;top:1330px;width:674px;height:20px;background:#444548;border-top:2px solid #505154;border-bottom:2px solid #505154"></div>
<svg style="left:714px;top:1324px" width="40" height="36"><path d="M12 16L20 10V22Z" fill="#5d5e61"/></svg>
<!--TRANSPORT-->
<div class="a" style="left:194px;top:1012px;width:504px;height:310px;background:#343539"></div>
<div class="a" style="left:698px;top:266px;width:2px;height:1056px;background:#3a3b3d"></div>
<div class="a" style="left:202px;top:1322px;width:496px;height:2px;background:#5b5c5f"></div>
<div class="t" style="left:205px;top:1325px;font-size:21px;line-height:24px;color:#a4a5a7">Track 2 [FX] 1</div>
<div class="a" style="left:190px;top:1360px;width:1230px;height:60px;background:linear-gradient(#505356,#44474a);border-top:2px solid #232426;border-left:2px solid #232426"></div>
<div class="a" style="left:300px;top:1422px;width:1120px;height:8px;background:#28292c;border-top-left-radius:8px"></div>
<div class="btn " style="left:210px;top:1370px;width:72px;height:42px;border-color:#232426"></div>
<div class="btn " style="left:290px;top:1370px;width:72px;height:42px;border-color:#232426"></div>
<div class="btn " style="left:370px;top:1370px;width:72px;height:42px;border-color:#232426"></div>
<div class="btn " style="left:450px;top:1370px;width:72px;height:42px;border-color:#232426"></div>
<div class="btn " style="left:530px;top:1370px;width:72px;height:42px;border-color:#232426"></div>
<div class="btn red" style="left:610px;top:1370px;width:72px;height:42px;border-color:#232426"></div>
<div class="btn blue" style="left:690px;top:1370px;width:72px;height:42px;border-color:#232426"></div>
<svg style="left:210px;top:1370px" width="72" height="42"><path d="M24 21L36 10.500V31.500Z M35 21L46 10.500V31.500Z" fill="#a9aaac"/></svg>
<svg style="left:290px;top:1370px" width="72" height="42"><rect x="26" y="10" width="20" height="21" fill="#a9aaac"/></svg>
<svg style="left:370px;top:1370px" width="72" height="42"><rect x="25.500" y="10" width="8" height="21" fill="#a9aaac"/><rect x="38.500" y="10" width="8" height="21" fill="#a9aaac"/></svg>
<svg style="left:450px;top:1370px" width="72" height="42"><path d="M25.500 10V32.500L50 21Z" fill="#a9aaac"/></svg>
<svg style="left:530px;top:1370px" width="72" height="42"><path d="M26 10.500V31.500L37.500 21Z M37 10.500V31.500L48 21Z" fill="#a9aaac"/></svg>
<svg style="left:610px;top:1370px" width="72" height="42"><circle cx="35.750" cy="20.500" r="8.700" stroke="#c2bebf" stroke-width="6" fill="none"/></svg>
<svg style="left:690px;top:1370px" width="72" height="42"><path d="M26.500 19A8.500 8.500 0 0 1 42.500 15.500" stroke="#cdd9e3" stroke-width="5" fill="none"/><path d="M46.500 11V20H37.500Z" fill="#cdd9e3"/><path d="M43.500 22A8.500 8.500 0 0 1 27.500 25.500" stroke="#cdd9e3" stroke-width="5" fill="none"/><path d="M23.500 30V21H32.500Z" fill="#cdd9e3"/></svg>
<div class="btn" style="left:802px;top:1370px;width:100px;height:42px;border-color:#232426"></div>
<svg style="left:802px;top:1370px" width="100" height="42"><path d="M41 26L51 14.500L61 25" stroke="#a9aaac" stroke-width="1.6" fill="none"/><rect x="48" y="11" width="6" height="6" fill="#a9aaac"/><rect x="37" y="23" width="6" height="6" fill="#a9aaac"/><rect x="58" y="22" width="6" height="6" fill="#a9aaac"/></svg>
<div class="btn" style="left:942px;top:1370px;width:440px;height:42px;border-color:#232426;background:linear-gradient(#4c4f52,#3f4245)"></div>
<div class="t" style="left:957px;top:1370px;font-size:31px;line-height:34px;color:#9fa0a2">1.1.58 / 0:00.287</div>
<div class="t" style="left:1279px;top:1376px;font-size:21px;letter-spacing:.3px;line-height:24px;color:#8d8e90">[Stopped]</div>
<div class="btn" style="left:1402px;top:1370px;width:40px;height:42px;border-color:#232426;background:linear-gradient(#4c4f52,#3f4245)"></div>
<div class="a" style="left:1417px;top:1380px;width:3px;height:12px;background:#8d8e90"></div>
</body>
</html>
